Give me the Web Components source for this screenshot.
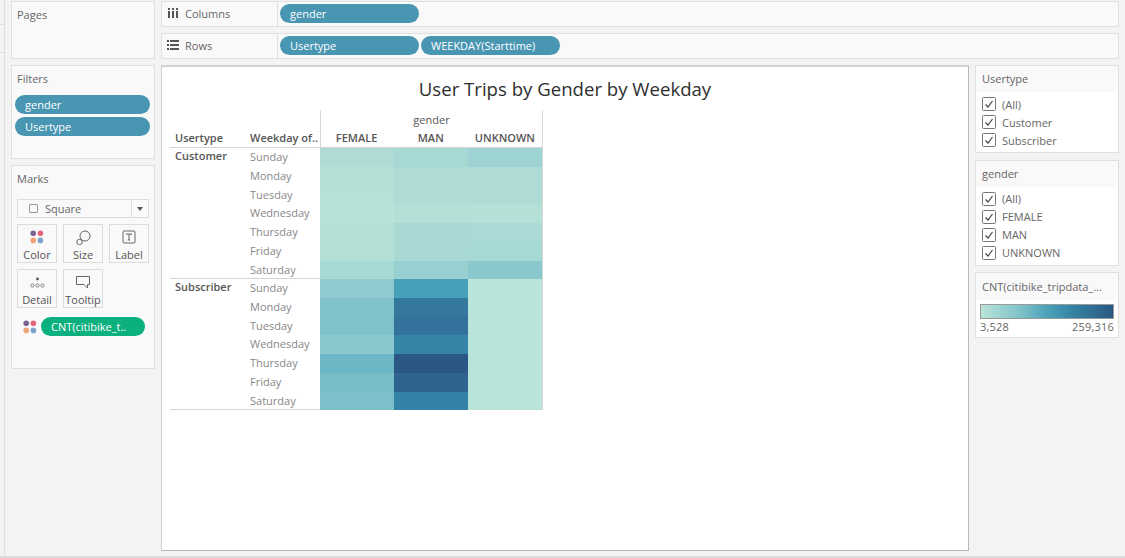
<!DOCTYPE html>
<html lang="en">
<head>
<meta charset="UTF-8">
<title>User Trips by Gender by Weekday</title>
<style>
    html, body { margin: 0; height: 100%; }
    body { background: #f3f3f3; font: 11px "Open Sans", "Liberation Sans", sans-serif; color: #666; overflow: hidden; }
</style>
</head>
<body>
<tab-app>
    <tab-strip slot="strip"></tab-strip>

    <tab-card slot="pages" title="Pages"></tab-card>

    <div slot="shelves">
        <tab-shelf icon="columns" label="Columns">
            <tab-pill width="139">gender</tab-pill>
        </tab-shelf>
        <tab-shelf icon="rows" label="Rows">
            <tab-pill width="139">Usertype</tab-pill>
            <tab-pill width="139">WEEKDAY(Starttime)</tab-pill>
        </tab-shelf>
    </div>

    <div slot="left">
        <tab-card title="Filters" height="94">
            <tab-pill width="135">gender</tab-pill>
            <tab-pill width="135">Usertype</tab-pill>
        </tab-card>
        <tab-card title="Marks" height="204">
            <marks-panel></marks-panel>
        </tab-card>
    </div>

    <tab-view slot="view" title="User Trips by Gender by Weekday">
        <heat-table></heat-table>
    </tab-view>

    <div slot="right">
        <filter-card title="Usertype" height="88">
            <check-item>(All)</check-item>
            <check-item>Customer</check-item>
            <check-item>Subscriber</check-item>
        </filter-card>
        <filter-card title="gender" height="106">
            <check-item>(All)</check-item>
            <check-item>FEMALE</check-item>
            <check-item>MAN</check-item>
            <check-item>UNKNOWN</check-item>
        </filter-card>
        <color-legend title="CNT(citibike_tripdata_..." min="3,528" max="259,316"></color-legend>
    </div>
</tab-app>

<script>
    const ICONS = {
        columns: `<svg width="12" height="12" viewBox="0 0 12 12" fill="#555">
            <rect x="1" y="1" width="2" height="2"/><rect x="5" y="1" width="2" height="2"/><rect x="9" y="1" width="2" height="2"/>
            <rect x="1" y="4" width="2" height="7"/><rect x="5" y="4" width="2" height="7"/><rect x="9" y="4" width="2" height="7"/></svg>`,
        rows: `<svg width="12" height="12" viewBox="0 0 12 12" fill="#555">
            <rect x="0" y="1" width="2" height="2"/><rect x="0" y="5" width="2" height="2"/><rect x="0" y="9" width="2" height="2"/>
            <rect x="3" y="1" width="9" height="2"/><rect x="3" y="5" width="9" height="2"/><rect x="3" y="9" width="9" height="2"/></svg>`,
        color: `<svg width="14" height="14" viewBox="0 0 14 14">
            <circle cx="3.200" cy="3.200" r="2.800" fill="#7b6293"/><circle cx="10.400" cy="3.200" r="2.800" fill="#e8647c"/>
            <circle cx="3.200" cy="10.400" r="2.800" fill="#f0a476"/><circle cx="10.400" cy="10.400" r="2.800" fill="#7ea3cb"/></svg>`,
        size: `<svg width="15" height="15" viewBox="0 0 15 15" fill="none" stroke="#666">
            <circle cx="9" cy="6" r="5"/><circle cx="3.500" cy="12" r="2.700" fill="#f9f9f9"/></svg>`,
        label: `<svg width="14" height="14" viewBox="0 0 14 14" fill="none" stroke="#666">
            <rect x="1" y="1" width="12" height="12" rx="1"/><path d="M4.500 5V4h5v1M7 4v6M5.800 10h2.400"/></svg>`,
        detail: `<svg width="15" height="13" viewBox="0 0 15 13" fill="none" stroke="#666" stroke-width=".8">
            <circle cx="7.500" cy="3" r="1.400" fill="#555" stroke="none"/>
            <circle cx="2.500" cy="9.500" r="1.600"/><circle cx="7.500" cy="9.500" r="1.600"/><circle cx="12.500" cy="9.500" r="1.600"/></svg>`,
        tooltip: `<svg width="16" height="15" viewBox="0 0 16 15" fill="none" stroke="#666">
            <path d="M1.500 1.500h13v8h-2v3.500l-3.500-3.500h-7.500z"/></svg>`
    };

    class TabApp extends HTMLElement {
        constructor() {
            super();
            this.attachShadow({ mode: 'open' });
            this.shadowRoot.innerHTML = `
                <style>
                    :host { display: grid; box-sizing: border-box; height: 558px; padding: 1px 0 2px;
                        grid-template-columns: 5px 144px 808px 144px; column-gap: 6px; row-gap: 6px;
                        grid-template-rows: 58px 486px; border-bottom: 2px solid #dcdcdc; }
                    .strip { grid-row: 1 / 3; grid-column: 1; margin-top: -1px; margin-bottom: -5px; }
                    .shelves { grid-column: 3 / 5; }
                    ::slotted([slot=shelves]), ::slotted([slot=left]), ::slotted([slot=right]) {
                        display: flex; flex-direction: column; gap: 6px; }
                    ::slotted([slot=right]) { gap: 6.500px; }
                </style>
                <div class="strip"><slot name="strip"></slot></div>
                <slot name="pages"></slot>
                <div class="shelves"><slot name="shelves"></slot></div>
                <slot name="left"></slot>
                <slot name="view"></slot>
                <slot name="right"></slot>`;
        }
    }

    class TabStrip extends HTMLElement {
        constructor() {
            super();
            this.attachShadow({ mode: 'open' });
            this.shadowRoot.innerHTML = `
                <style>
                    :host { display: block; box-sizing: border-box; width: 5px; height: 100%; border-right: 1px solid #dedede; }
                    div { height: 24px; border-bottom: 1px solid #dedede; }
                    div + div { height: 27px; }
                </style>
                <div></div><div></div>`;
        }
    }

    class TabCard extends HTMLElement {
        connectedCallback() {
            if (this.shadowRoot) return;
            this.attachShadow({ mode: 'open' });
            const h = this.getAttribute('height');
            this.shadowRoot.innerHTML = `
                <style>
                    :host { display: block; box-sizing: border-box; background: #f9f9f9; border: 1.500px solid #e0e0e0;
                        ${h ? 'height: ' + h + 'px;' : ''} }
                    .title { padding: 5px 5px 0; height: 24px; line-height: 16px; color: #666; }
                    .body { display: flex; flex-direction: column; gap: 3px; padding: 0 3px; }
                </style>
                <div class="title">${this.getAttribute('title')}</div>
                <div class="body"><slot></slot></div>`;
        }
    }

    class TabShelf extends HTMLElement {
        connectedCallback() {
            if (this.shadowRoot) return;
            this.attachShadow({ mode: 'open' });
            this.shadowRoot.innerHTML = `
                <style>
                    :host { display: flex; box-sizing: border-box; height: 26px; background: #f9f9f9; border: 1.500px solid #e0e0e0; }
                    .head { display: flex; align-items: center; gap: 6px; box-sizing: border-box; width: 116px; padding: 0 0 1.500px 5px;
                        border-right: 1.500px solid #e0e0e0; color: #666; }
                    .head svg { flex: none; }
                    .pills { display: flex; align-items: center; gap: 2px; padding: 0 0 1px 2px; }
                </style>
                <div class="head">${ICONS[this.getAttribute('icon')]}<span>${this.getAttribute('label')}</span></div>
                <div class="pills"><slot></slot></div>`;
        }
    }

    class TabPill extends HTMLElement {
        connectedCallback() {
            if (this.shadowRoot) return;
            this.attachShadow({ mode: 'open' });
            const bg = this.getAttribute('color') || '#4996b2';
            this.shadowRoot.innerHTML = `
                <style>
                    :host { display: block; box-sizing: border-box; width: ${this.getAttribute('width')}px; height: 19px; line-height: 19px;
                        padding-left: 10px; border-radius: 10px; background: ${bg}; color: #fff; white-space: nowrap; overflow: hidden; }
                </style>
                <slot></slot>`;
        }
    }

    class MarkButton extends HTMLElement {
        connectedCallback() {
            if (this.shadowRoot) return;
            this.attachShadow({ mode: 'open' });
            this.shadowRoot.innerHTML = `
                <style>
                    :host { display: flex; flex-direction: column; align-items: center; box-sizing: border-box; height: 39px;
                        border: 1px solid #dcdcdc; background: #f9f9f9; color: #555; }
                    .ico { height: 23px; display: flex; align-items: center; justify-content: center; margin-top: 1px; }
                    span { line-height: 14px; white-space: nowrap; }
                </style>
                <div class="ico">${ICONS[this.getAttribute('icon')]}</div>
                <span><slot></slot></span>`;
        }
    }
    customElements.define('mark-button', MarkButton);

    class MarksPanel extends HTMLElement {
        constructor() {
            super();
            this.attachShadow({ mode: 'open' });
            this.shadowRoot.innerHTML = `
                <style>
                    :host { display: block; padding: 4px 2px 0; }
                    .select { display: flex; align-items: center; box-sizing: border-box; height: 19px; background: #f9f9f9;
                        border: 1px solid #dcdcdc; color: #666; }
                    .select .val { flex: 1; display: flex; align-items: center; gap: 7px; padding-left: 11px; border-right: 1px solid #dcdcdc; height: 100%; }
                    .sq { width: 7px; height: 7px; border: 1px solid #999; border-radius: 1px; }
                    .arrow { width: 16px; display: flex; justify-content: center; }
                    .arrow i { border: 3.500px solid transparent; border-top: 4px solid #555; border-bottom: 0; }
                    .grid { display: grid; grid-template-columns: 40px 40px 40px; justify-content: space-between; row-gap: 6px; margin-top: 6px; }
                    .field { display: flex; align-items: center; gap: 4px; margin: 9px 0 0 6px; }
                </style>
                <div class="select">
                    <div class="val"><span class="sq"></span><span>Square</span></div>
                    <div class="arrow"><i></i></div>
                </div>
                <div class="grid">
                    <mark-button icon="color">Color</mark-button>
                    <mark-button icon="size">Size</mark-button>
                    <mark-button icon="label">Label</mark-button>
                    <mark-button icon="detail">Detail</mark-button>
                    <mark-button icon="tooltip">Tooltip</mark-button>
                </div>
                <div class="field">${ICONS.color}<tab-pill width="104" color="#0bb07e">CNT(citibike_t..</tab-pill></div>`;
        }
    }

    class TabView extends HTMLElement {
        connectedCallback() {
            if (this.shadowRoot) return;
            this.attachShadow({ mode: 'open' });
            this.shadowRoot.innerHTML = `
                <style>
                    :host { display: block; box-sizing: border-box; background: #fff;
                        border: 1px solid #b9b9b9; border-left: 1px solid #cfcfcf; border-top: 2px solid #d2d2d2; }
                    h1 { margin: 0; padding-top: 9px; height: 34px; font: 500 18.600px/26px "Open Sans", "Liberation Sans", sans-serif;
                        color: #2e2e2e; text-align: center; }
                    .plot { padding-left: 8px; }
                </style>
                <h1>${this.getAttribute('title')}</h1>
                <div class="plot"><slot></slot></div>`;
        }
    }

    const WEEKDAYS = ['Sunday', 'Monday', 'Tuesday', 'Wednesday', 'Thursday', 'Friday', 'Saturday'];
    const HEAT = [
        { name: 'Customer', cols: [
            ['#aedcd5', '#b5e0d7', '#b6e1d8', '#b7e2d8', '#b3dfd6', '#b3dfd6', '#a6d8d4'],
            ['#a6d8d4', '#aedbd6', '#aedbd6', '#b4dfd7', '#a9d9d5', '#a9d9d5', '#98cfd1'],
            ['#9dd3d2', '#aedbd6', '#aedbd6', '#b4e0d7', '#aadad5', '#a6d8d4', '#8bc8ce'] ] },
        { name: 'Subscriber', cols: [
            ['#90cace', '#7fc2ca', '#7fc2ca', '#8bc8ce', '#6cb7c5', '#77bdc8', '#7dc0ca'],
            ['#46a0b8', '#34789d', '#33739b', '#3586a6', '#2a5783', '#2e648e', '#3582a8'],
            ['#b9e4d9', '#b9e4d9', '#b9e4d9', '#b9e4d9', '#b9e4d9', '#b9e4d9', '#b9e4d9'] ] }
    ];

    class HeatTable extends HTMLElement {
        constructor() {
            super();
            this.attachShadow({ mode: 'open' });
            const groups = HEAT.map(g => `
                <div class="group">
                    <div class="type">${g.name}</div>
                    <div class="days">${WEEKDAYS.map(d => `<div>${d}</div>`).join('')}</div>
                    ${g.cols.map(c => `<div class="col">${c.map(v => `<i style="background:${v}"></i>`).join('')}</div>`).join('')}
                </div>`).join('');
            this.shadowRoot.innerHTML = `
                <style>
                    :host { display: block; width: 373px; box-sizing: border-box; border-right: 1.500px solid #d8d8d8; font-size: 11px; }
                    .head { display: grid; grid-template-columns: 80px 70px 1fr; height: 38px; border-bottom: 1.500px solid #d4d4d4; box-sizing: border-box; }
                    .head b { font-weight: 600; color: #555; padding: 20px 0 0 5px; white-space: nowrap; line-height: 16px; }
                    .head b + b { padding-left: 0; }
                    .gender { border-left: 1.500px solid #d8d8d8; text-align: center; color: #555; }
                    .gender .g { line-height: 16px; padding-top: 2px; }
                    .gender .cats { display: grid; grid-template-columns: repeat(3, 1fr); line-height: 16px; font-weight: 600; margin: 2px 0 0 -1.500px; }
                    .group { display: grid; grid-template-columns: 80px 70px 1fr 1fr 1fr; height: 131px; border-bottom: 1.500px solid #d4d4d4; box-sizing: border-box; }
                    .type { font-weight: 600; color: #555; padding-left: 5px; line-height: 16px; }
                    .days { color: #888; }
                    .days div { height: 18.750px; line-height: 18.750px; }
                    .col { display: flex; flex-direction: column; }
                    .col i { display: block; flex: 1; }
                </style>
                <div class="head">
                    <b>Usertype</b><b>Weekday of..</b>
                    <div class="gender">
                        <div class="g">gender</div>
                        <div class="cats"><span>FEMALE</span><span>MAN</span><span>UNKNOWN</span></div>
                    </div>
                </div>
                ${groups}`;
        }
    }

    class FilterCard extends HTMLElement {
        connectedCallback() {
            if (this.shadowRoot) return;
            this.attachShadow({ mode: 'open' });
            this.shadowRoot.innerHTML = `
                <style>
                    :host { display: block; box-sizing: border-box; height: ${this.getAttribute('height')}px; background: #fff; border: 1.500px solid #e0e0e0; }
                    .title { height: 26px; line-height: 26px; padding-left: 6px; background: #f9f9f9; color: #666; }
                    .body { padding-top: 3px; }
                </style>
                <div class="title">${this.getAttribute('title')}</div>
                <div class="body"><slot></slot></div>`;
        }
    }

    class CheckItem extends HTMLElement {
        constructor() {
            super();
            this.attachShadow({ mode: 'open' });
            this.shadowRoot.innerHTML = `
                <style>
                    :host { display: flex; align-items: center; gap: 6px; height: 18px; padding-left: 6px; color: #666; }
                    svg { flex: none; }
                </style>
                <svg width="14" height="14" viewBox="0 0 14 14" fill="none">
                    <rect x=".5" y=".5" width="13" height="13" rx="1" stroke="#777"/>
                    <path d="M3.500 7.500l2.500 2.500 4.500-6" stroke="#444" stroke-width="1.200"/>
                </svg>
                <span><slot></slot></span>`;
        }
    }

    class ColorLegend extends HTMLElement {
        connectedCallback() {
            if (this.shadowRoot) return;
            this.attachShadow({ mode: 'open' });
            this.shadowRoot.innerHTML = `
                <style>
                    :host { display: block; box-sizing: border-box; height: 66px; background: #fff; border: 1.500px solid #e0e0e0; }
                    .title { height: 27px; line-height: 27px; padding-left: 6px; background: #f9f9f9; color: #666; white-space: nowrap; }
                    .bar { box-sizing: border-box; height: 15px; margin: 4px 4px 0; border: 1px solid #9a9a9a;
                        background: linear-gradient(90deg, #b9e4d9 0%, #7fc2ca 30%, #4ba3b9 50%, #3586a6 68%, #2a5783 100%); }
                    .range { display: flex; justify-content: space-between; padding: 0 4px; line-height: 16px; color: #666; letter-spacing: .2px; }
                </style>
                <div class="title">${this.getAttribute('title')}</div>
                <div class="bar"></div>
                <div class="range"><span>${this.getAttribute('min')}</span><span>${this.getAttribute('max')}</span></div>`;
        }
    }

    customElements.define('tab-pill', TabPill);
    customElements.define('marks-panel', MarksPanel);
    customElements.define('tab-strip', TabStrip);
    customElements.define('tab-card', TabCard);
    customElements.define('tab-shelf', TabShelf);
    customElements.define('tab-view', TabView);
    customElements.define('heat-table', HeatTable);
    customElements.define('filter-card', FilterCard);
    customElements.define('check-item', CheckItem);
    customElements.define('color-legend', ColorLegend);
    customElements.define('tab-app', TabApp);
</script>
</body>
</html>
